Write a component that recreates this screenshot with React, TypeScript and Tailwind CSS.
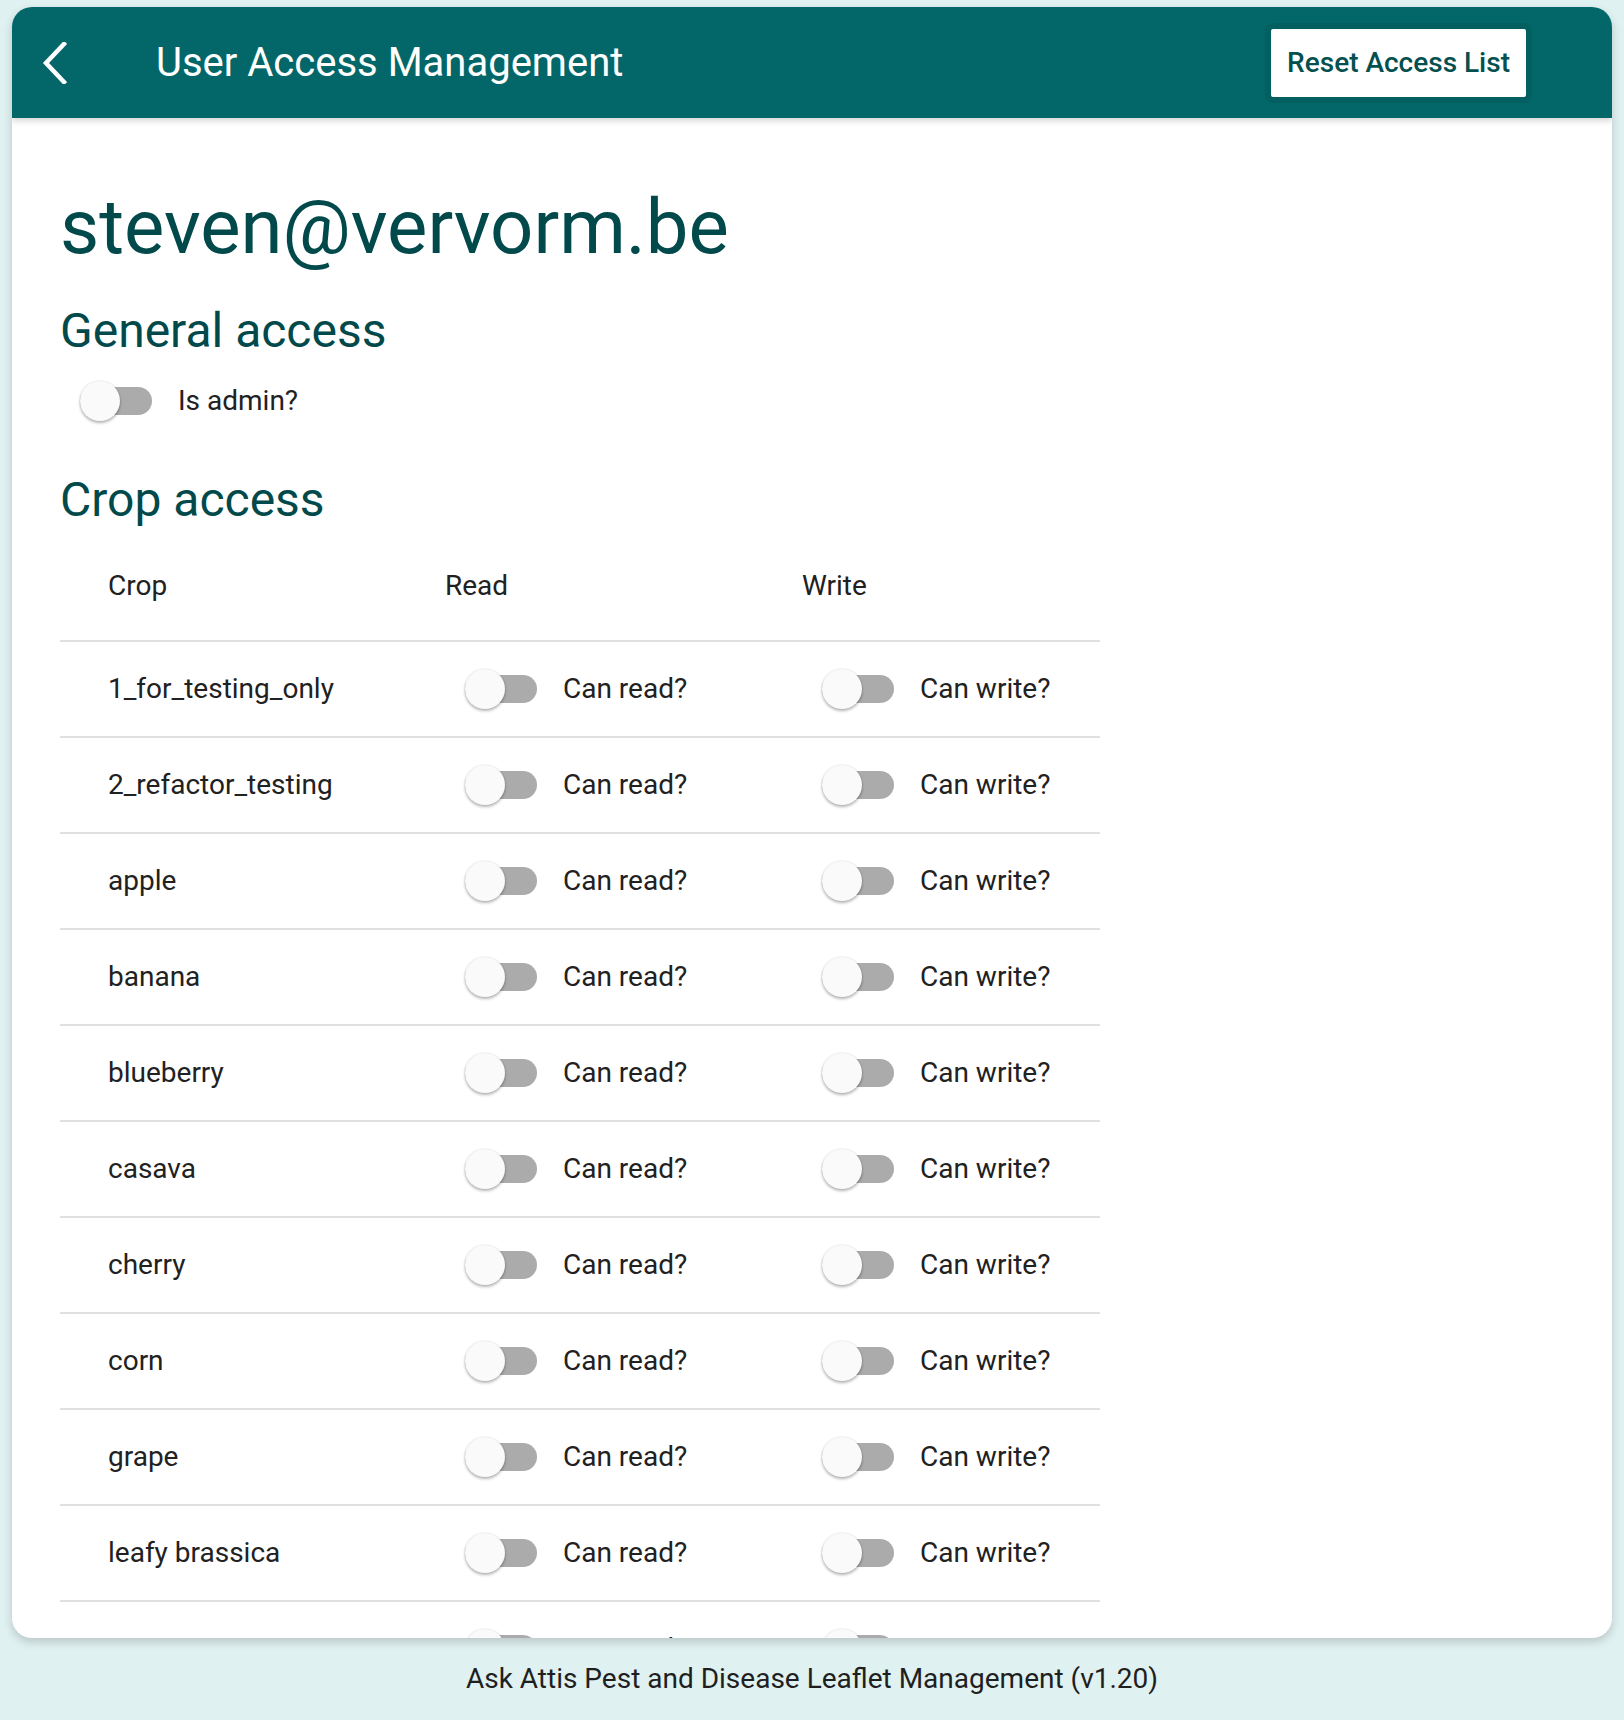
import React from "react";

const crops = [
  "1_for_testing_only",
  "2_refactor_testing",
  "apple",
  "banana",
  "blueberry",
  "casava",
  "cherry",
  "corn",
  "grape",
  "leafy brassica",
  "mango",
];

function Toggle({ label }: { label: string }) {
  return (
    <div className="flex items-center">
      <div className="relative ml-[20px] flex h-[40px] w-[72px] items-center">
        <div className="h-[28px] w-[72px] rounded-full bg-[#ababab]" />
        <div className="absolute left-0 top-0 h-[40px] w-[40px] rounded-full bg-[#fafafa] shadow-[0_2px_3px_rgba(0,0,0,0.28),0_0_2px_rgba(0,0,0,0.14)]" />
      </div>
      <span className="ml-[26px] text-[28px] text-[#212121]">{label}</span>
    </div>
  );
}

export default function App() {
  return (
    <div
      className="flex h-[1720px] w-[1624px] flex-col bg-[#e0f1f1]"
      style={{ fontFamily: "Roboto, 'Noto Sans', sans-serif" }}
    >
      {/* Card */}
      <div className="mx-[12px] mt-[7px] flex h-[1631px] flex-col overflow-hidden rounded-[20px] bg-white shadow-[0_4px_10px_rgba(0,0,0,0.18)]">
        {/* Toolbar */}
        <div className="relative z-10 flex h-[111px] shrink-0 items-center justify-between bg-[#03676a] pl-[29px] pr-[80px] shadow-[0_3px_6px_rgba(0,0,0,0.16)]">
          <div className="flex items-center">
            <svg width="26" height="42" viewBox="0 0 26 42" fill="none">
              <polyline points="23,2 5,21 23,40" stroke="white" strokeWidth="4.5" strokeLinecap="square" />
            </svg>
            <span className="ml-[89px] text-[40px] text-white">User Access Management</span>
          </div>
          <button className="rounded-[8px] border-[6px] border-[#045f61] bg-white px-[16px] py-0">
            <span className="block h-[68px] leading-[68px] text-[28px] font-medium text-[#03504f]">
              Reset Access List
            </span>
          </button>
        </div>

        {/* Content */}
        <div className="flex flex-col pl-[48px]">
          <div className="mt-[64px] h-[90px] leading-[90px] text-[76px] text-[#01494a]">steven@vervorm.be</div>

          <div className="mt-[27px] h-[64px] leading-[64px] text-[48px] text-[#01494a]">General access</div>
          <div className="mt-[17px]">
            <Toggle label="Is admin?" />
          </div>

          <div className="mt-[47px] h-[62px] leading-[62px] text-[48px] text-[#01494a]">Crop access</div>

          {/* Table */}
          <div className="w-[1040px]">
            <div className="flex h-[109px] items-center text-[28px] text-[#212121]">
              <div className="w-[385px] pl-[48px]">Crop</div>
              <div className="w-[357px]">Read</div>
              <div className="flex-1">Write</div>
            </div>
            <div className="h-[2px] bg-[#e0e0e0]" />
            {crops.map((crop) => (
              <div key={crop}>
                <div className="flex h-[94px] items-center">
                  <div className="w-[385px] pl-[48px] text-[28px] text-[#212121]">{crop}</div>
                  <div className="w-[357px]">
                    <Toggle label="Can read?" />
                  </div>
                  <div className="flex-1">
                    <Toggle label="Can write?" />
                  </div>
                </div>
                <div className="h-[2px] bg-[#e0e0e0]" />
              </div>
            ))}
          </div>
        </div>
      </div>

      {/* Footer */}
      <div className="flex flex-1 items-center justify-center text-[28px] text-[#1f1f1f]">
        Ask Attis Pest and Disease Leaflet Management (v1.20)
      </div>
    </div>
  );
}
